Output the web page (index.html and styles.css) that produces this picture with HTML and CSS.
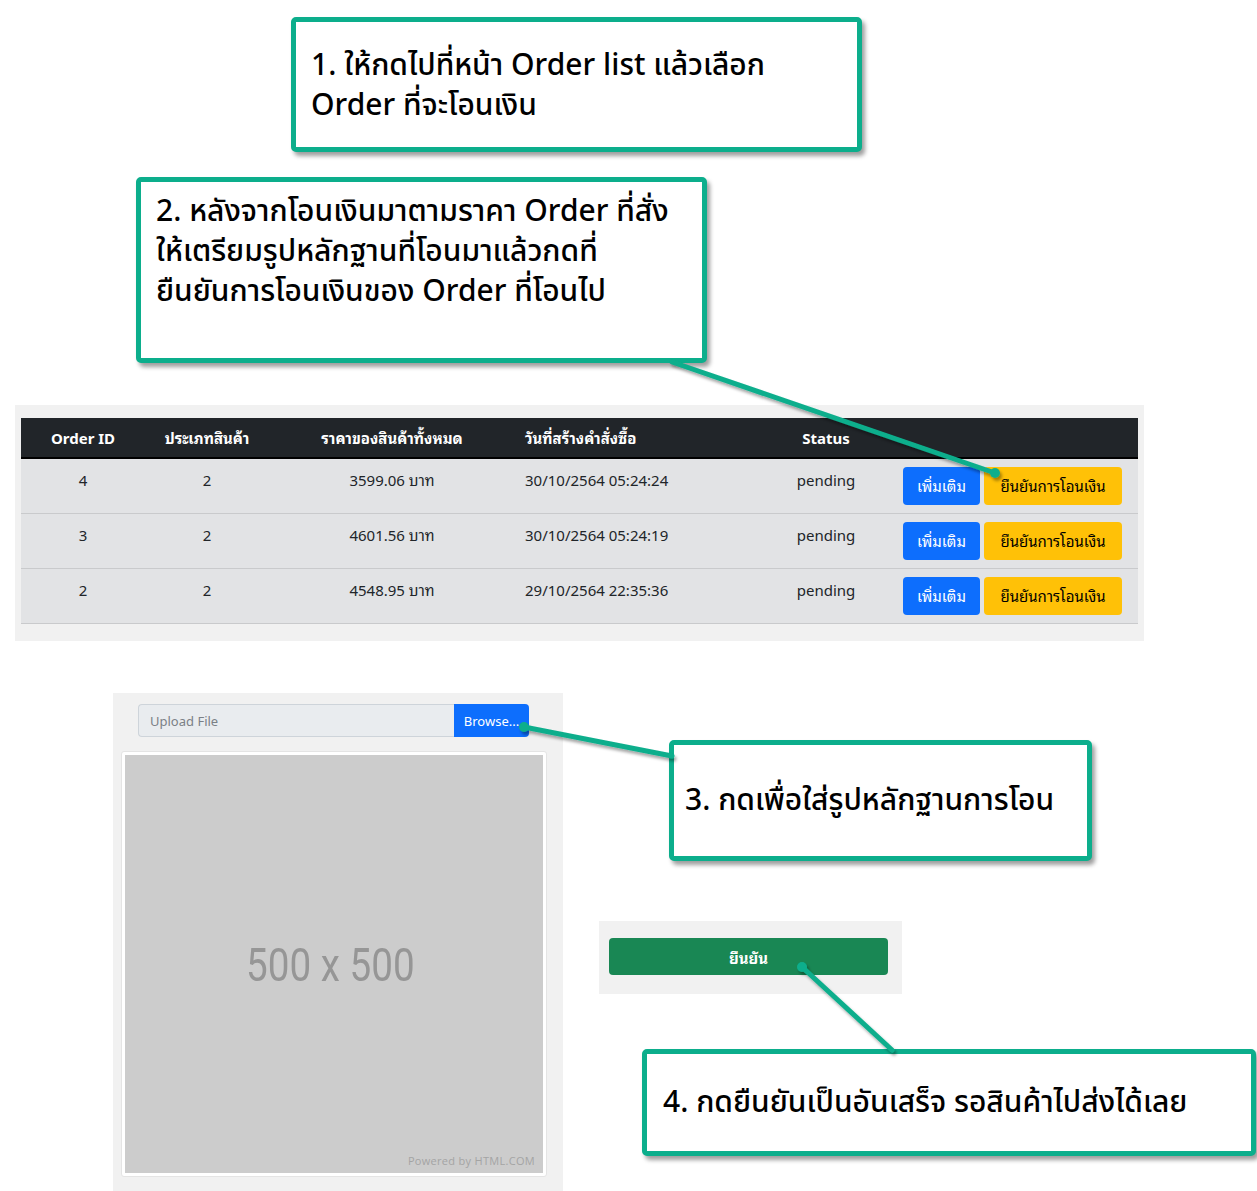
FILE: index.html
```html
<!DOCTYPE html>
<html lang="th">
<head>
<meta charset="utf-8">
<title>ขั้นตอนการโอนเงิน</title>
<link rel="stylesheet" href="styles.css">
</head>
<body>
<div class="canvas">

  <div class="callout c1"><p>1. ให้กดไปที่หน้า Order list แล้วเลือก<br>Order ที่จะโอนเงิน</p></div>
  <div class="callout c2"><p>2. หลังจากโอนเงินมาตามราคา Order ที่สั่ง<br>ให้เตรียมรูปหลักฐานที่โอนมาแล้วกดที่<br>ยืนยันการโอนเงินของ Order ที่โอนไป</p></div>

  <section class="panel table-panel">
    <div class="otable">
      <div class="orow head">
        <div class="cell">Order ID</div>
        <div class="cell">ประเภทสินค้า</div>
        <div class="cell">ราคาของสินค้าทั้งหมด</div>
        <div class="cell left">วันที่สร้างคำสั่งซื้อ</div>
        <div class="cell">Status</div>
        <div class="cell"></div>
      </div>
      <div class="orow">
        <div class="cell">4</div>
        <div class="cell">2</div>
        <div class="cell">3599.06 บาท</div>
        <div class="cell left">30/10/2564 05:24:24</div>
        <div class="cell">pending</div>
        <div class="cell actions"><span class="btn blue">เพิ่มเติม</span><span class="btn yellow">ยืนยันการโอนเงิน</span></div>
      </div>
      <div class="orow">
        <div class="cell">3</div>
        <div class="cell">2</div>
        <div class="cell">4601.56 บาท</div>
        <div class="cell left">30/10/2564 05:24:19</div>
        <div class="cell">pending</div>
        <div class="cell actions"><span class="btn blue">เพิ่มเติม</span><span class="btn yellow">ยืนยันการโอนเงิน</span></div>
      </div>
      <div class="orow">
        <div class="cell">2</div>
        <div class="cell">2</div>
        <div class="cell">4548.95 บาท</div>
        <div class="cell left">29/10/2564 22:35:36</div>
        <div class="cell">pending</div>
        <div class="cell actions"><span class="btn blue">เพิ่มเติม</span><span class="btn yellow">ยืนยันการโอนเงิน</span></div>
      </div>
    </div>
  </section>

  <section class="panel upload-panel">
    <div class="file-group">
      <div class="file-input">Upload File</div>
      <div class="file-btn">Browse...</div>
    </div>
    <div class="preview">
      <div class="placeholder">
        <span class="ph-size">500 x 500</span>
        <span class="ph-credit">Powered by HTML.COM</span>
      </div>
    </div>
  </section>

  <section class="panel confirm-panel">
    <div class="btn-confirm">ยืนยัน</div>
  </section>

  <div class="callout c3"><p>3. กดเพื่อใส่รูปหลักฐานการโอน</p></div>
  <div class="callout c4"><p>4. กดยืนยันเป็นอันเสร็จ รอสินค้าไปส่งได้เลย</p></div>

  <svg class="connectors" width="1257" height="1191" viewBox="0 0 1257 1191">
    <defs>
      <filter id="sh" x="-20%" y="-20%" width="140%" height="140%">
        <feDropShadow dx="2" dy="3" stdDeviation="1.5" flood-color="#000" flood-opacity="0.35"/>
      </filter>
    </defs>
    <g filter="url(#sh)" stroke="#0cae8c" stroke-width="5" stroke-linecap="round" fill="#0cae8c">
      <line x1="672" y1="362" x2="995" y2="473"/>
      <circle cx="995" cy="473" r="5" stroke="none"/>
      <line x1="524" y1="727" x2="672" y2="756"/>
      <circle cx="524" cy="727" r="5" stroke="none"/>
      <line x1="802" y1="967" x2="892" y2="1050"/>
      <circle cx="802" cy="967" r="5" stroke="none"/>
    </g>
  </svg>

</div>
</body>
</html>
```

FILE: styles.css
```css
* { box-sizing: border-box; }

html, body {
  margin: 0;
  padding: 0;
  background: #ffffff;
}

.canvas {
  position: relative;
  width: 1257px;
  height: 1191px;
  overflow: hidden;
  font-family: "Noto Sans", "Open Sans", "Noto Sans Thai Looped", "Noto Sans Thai", sans-serif;
  color: #212529;
}

/* ---------- callouts ---------- */
.callout {
  position: absolute;
  z-index: 3;
  background: #ffffff;
  border: 5px solid #0cae8c;
  border-radius: 5px;
  box-shadow: 3px 4px 4px rgba(0, 0, 0, 0.38);
  display: flex;
  font-family: "Noto Sans Thai", "Noto Sans", "Open Sans", sans-serif;
  font-size: 30px;
  font-weight: 500;
  color: #000;
}

.callout p {
  margin: 0;
  line-height: 40px;
  white-space: nowrap;
}

.c1 { left: 291px; top: 17px; width: 571px; height: 135px; padding: 24px 0 0 15px; }
.c2 { left: 136px; top: 177px; width: 571px; height: 186px; padding: 10px 0 0 15px; }
.c3 { left: 669px; top: 740px; width: 423px; height: 121px; padding: 0 0 0 11px; align-items: center; }
.c4 { left: 642px; top: 1049px; width: 614px; height: 107px; padding: 0 0 0 16px; align-items: center; }

/* ---------- panels ---------- */
.panel {
  position: absolute;
  background: #f1f1f1;
}

.table-panel {
  left: 15px;
  top: 405px;
  width: 1129px;
  height: 236px;
  padding: 13px 6px 0 6px;
}

.otable {
  display: flex;
  flex-direction: column;
  font-size: 15px;
}

.orow {
  display: grid;
  grid-template-columns: 124px 124px 246px 245px 132px 245px;
  background: #e2e3e5;
  border-bottom: 1px solid #c9cacc;
  height: 55px;
}

.orow .cell {
  padding: 10px 0 0 0;
  text-align: center;
  line-height: 22px;
  white-space: nowrap;
}

.orow .cell.left {
  text-align: left;
  padding-left: 10px;
}

.orow.head {
  background: #212529;
  color: #ffffff;
  font-weight: 700;
  height: 41px;
  border-bottom: 2px solid #000;
}

.orow.head .cell {
  padding-top: 9px;
}

.orow .cell.actions {
  display: flex;
  gap: 4px;
  padding: 8px 0 0 11px;
}

.btn {
  display: flex;
  align-items: center;
  justify-content: center;
  height: 38px;
  border-radius: 4px;
  font-size: 15px;
}

.btn.blue {
  width: 77px;
  background: #0d6efd;
  color: #ffffff;
}

.btn.yellow {
  width: 138px;
  background: #ffc107;
  color: #000000;
}

/* ---------- upload ---------- */
.upload-panel {
  left: 113px;
  top: 693px;
  width: 450px;
  height: 498px;
  padding: 11px 0 0 8px;
  display: flex;
  flex-direction: column;
}

.file-group {
  display: flex;
  margin-left: 17px;
  width: 391px;
  height: 33px;
}

.file-input {
  flex: 1;
  background: #e9ecef;
  border: 1px solid #ced4da;
  border-right: none;
  border-radius: 4px 0 0 4px;
  color: #7b8086;
  font-size: 13px;
  padding: 0 0 0 11px;
  display: flex;
  align-items: center;
}

.file-btn {
  width: 75px;
  background: #0d6efd;
  color: #fff;
  font-size: 13px;
  border-radius: 0 4px 4px 0;
  display: flex;
  align-items: center;
  justify-content: center;
}

.preview {
  margin-top: 14px;
  width: 426px;
  height: 426px;
  background: #ffffff;
  border: 1px solid #e4e4e4;
  border-radius: 3px;
  padding: 3px;
}

.placeholder {
  position: relative;
  width: 100%;
  height: 100%;
  background: #cccccc;
  display: flex;
  flex-direction: column;
  align-items: center;
}

.ph-size {
  margin-top: 184px;
  margin-left: -8px;
  font-family: "Roboto", "Liberation Sans", sans-serif;
  font-size: 46px;
  color: #969696;
  line-height: 52px;
  transform: scaleX(0.84);
}

.ph-credit {
  margin-top: auto;
  align-self: flex-end;
  margin-right: 8px;
  margin-bottom: 5px;
  font-family: "Open Sans", sans-serif;
  font-size: 11px;
  color: #a4a4a4;
  letter-spacing: 0.3px;
}

/* ---------- confirm ---------- */
.confirm-panel {
  left: 599px;
  top: 921px;
  width: 303px;
  height: 73px;
  padding: 17px 0 0 10px;
}

.btn-confirm {
  width: 279px;
  height: 37px;
  background: #198754;
  color: #fff;
  border-radius: 4px;
  display: flex;
  align-items: center;
  justify-content: center;
  font-size: 15px;
  font-weight: 700;
}

/* ---------- connectors ---------- */
.connectors {
  position: absolute;
  left: 0;
  top: 0;
  z-index: 4;
  pointer-events: none;
}
```
